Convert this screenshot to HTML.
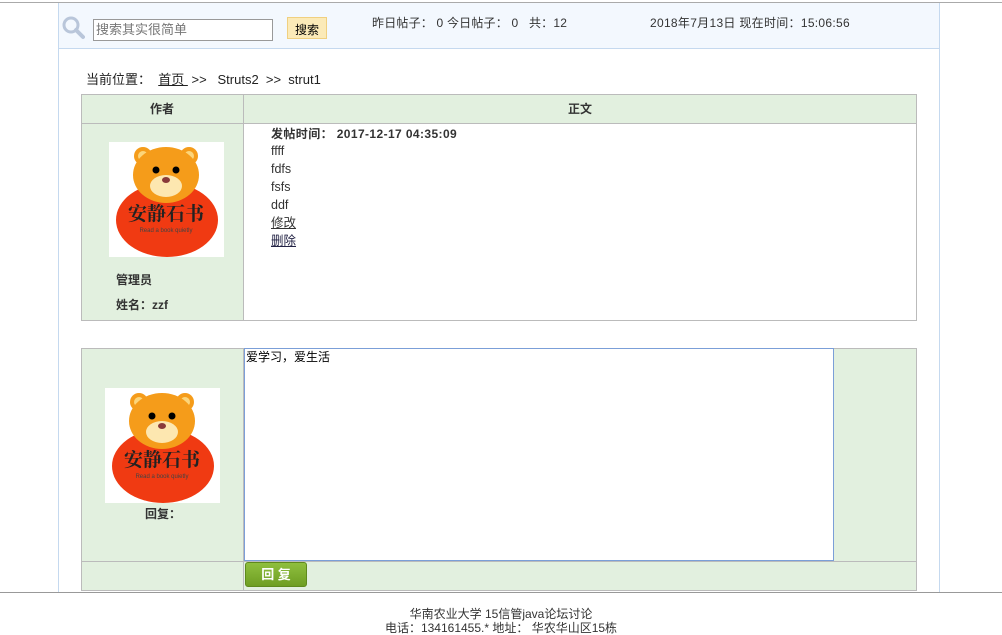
<!DOCTYPE html>
<html><head><meta charset="utf-8"><style>
*{margin:0;padding:0;box-sizing:border-box}
body{width:1002px;height:635px;position:relative;background:#fff;font-family:"Liberation Sans","Noto Sans CJK SC",sans-serif;font-size:12px;color:#333;overflow:hidden}
.a{position:absolute}
.g{background:#e2f0df}
.bd{border:1px solid #bbb}
</style></head><body>
<div class="a" style="left:0;top:2px;width:1002px;height:1px;background:#aaa"></div>
<div class="a" style="left:58px;top:3px;width:882px;height:590px;border-left:1px solid #c5d9ef;border-right:1px solid #c5d9ef"></div>
<div class="a" style="left:59px;top:3px;width:880px;height:46px;background:#f3f8fe;border-bottom:1px solid #c5d9ef"></div>
<svg class="a" style="left:61px;top:15px" width="24" height="26"><circle cx="10" cy="10" r="7" fill="none" stroke="#b9c6da" stroke-width="3"/><line x1="15" y1="15" x2="22" y2="22" stroke="#b9c6da" stroke-width="4" stroke-linecap="round"/></svg>
<div class="a" style="left:93px;top:19px;width:180px;height:22px;border:1px solid #999;background:#fff;color:#777;font-size:13px;padding:2px 2px;line-height:16px">搜索其实很简单</div>
<div class="a" style="left:287px;top:17px;width:40px;height:22px;background:#fbeab8;border:1px solid #f0d080;font-size:12px;text-align:center;line-height:24px;color:#000">搜索</div>
<div class="a" style="left:372px;top:14px;font-size:12px;color:#333;letter-spacing:0.2px">昨日帖子： 0 今日帖子： 0 &nbsp; 共：12</div>
<div class="a" style="left:650px;top:14px;font-size:12px;color:#333;letter-spacing:0.3px">2018年7月13日 现在时间：15:06:56</div>
<div class="a" style="left:86px;top:69px;font-size:13px;color:#222">当前位置： &nbsp;<u>首页 </u> &nbsp;&gt;&gt; &nbsp; Struts2 &nbsp;&gt;&gt; &nbsp;strut1</div>

<div class="a g bd" style="left:81px;top:94px;width:836px;height:227px"></div>
<div class="a" style="left:243px;top:94px;width:1px;height:227px;background:#bbb"></div>
<div class="a" style="left:81px;top:123px;width:836px;height:1px;background:#bbb"></div>
<div class="a" style="left:244px;top:124px;width:672px;height:196px;background:#fff"></div>
<div class="a" style="left:81px;top:100px;width:162px;text-align:center;font-weight:bold">作者</div>
<div class="a" style="left:244px;top:100px;width:672px;text-align:center;font-weight:bold">正文</div>
<div class="a" style="left:271px;top:125px;font-weight:bold;font-size:12px;letter-spacing:0.4px">发帖时间： 2017-12-17 04:35:09</div>
<div class="a" style="left:271px;top:142px;line-height:18px;font-size:12.5px">ffff<br>fdfs<br>fsfs<br>ddf<br><u>修改</u><br><u style="color:#224">删除</u></div>
<div class="a" style="left:116px;top:271px;font-weight:bold">管理员</div>
<div class="a" style="left:116px;top:296px;font-weight:bold">姓名：zzf</div>

<div class="a g bd" style="left:81px;top:348px;width:836px;height:243px"></div>
<div class="a" style="left:243px;top:348px;width:1px;height:243px;background:#bbb"></div>
<div class="a" style="left:81px;top:561px;width:836px;height:1px;background:#bbb"></div>
<div class="a" style="left:244px;top:348px;width:590px;height:213px;background:#fff;border:1px solid #7b9fd8;padding:0 1px;font-size:12px;color:#000;line-height:16px">爱学习，爱生活</div>
<div class="a" style="left:145px;top:505px;font-weight:bold">回复：</div>
<div class="a" style="left:245px;top:562px;width:62px;height:25px;background:linear-gradient(#8fbf3f,#6e9e22);border:1px solid #5e8a1c;border-radius:3px;color:#fff;font-weight:bold;text-align:center;line-height:23px;font-size:13px">回 复</div>

<div class="a" style="left:0;top:592px;width:1002px;height:1px;background:#999"></div>
<div class="a" style="left:0;top:607px;width:1002px;text-align:center;font-size:12px;color:#333;line-height:14px">华南农业大学 15信管java论坛讨论<br>电话：134161455.* 地址： 华农华山区15栋</div>

<svg class="a" style="left:109px;top:142px" width="115" height="115" viewBox="0 0 115 115"><rect width="115" height="115" fill="#fff"/><ellipse cx="58" cy="78" rx="51" ry="37" fill="#f03a12"/><circle cx="34" cy="14" r="9" fill="#f59c1a"/><circle cx="80" cy="14" r="9" fill="#f59c1a"/><circle cx="34" cy="14" r="5" fill="#fcd57a"/><circle cx="80" cy="14" r="5" fill="#fcd57a"/><ellipse cx="57" cy="33" rx="33" ry="28" fill="#f59c1a"/><ellipse cx="57" cy="44" rx="16" ry="11" fill="#fde7b0"/><circle cx="47" cy="28" r="3.5" fill="#000"/><circle cx="67" cy="28" r="3.5" fill="#000"/><ellipse cx="57" cy="38" rx="4" ry="3" fill="#8a3a3a"/><text x="57" y="78" text-anchor="middle" font-size="19" font-weight="bold" fill="#222" font-family="Noto Serif CJK SC,serif">安静石书</text><text x="57" y="90" text-anchor="middle" font-size="6" fill="#444">Read a book quietly</text></svg>
<svg class="a" style="left:105px;top:388px" width="115" height="115" viewBox="0 0 115 115"><rect width="115" height="115" fill="#fff"/><ellipse cx="58" cy="78" rx="51" ry="37" fill="#f03a12"/><circle cx="34" cy="14" r="9" fill="#f59c1a"/><circle cx="80" cy="14" r="9" fill="#f59c1a"/><circle cx="34" cy="14" r="5" fill="#fcd57a"/><circle cx="80" cy="14" r="5" fill="#fcd57a"/><ellipse cx="57" cy="33" rx="33" ry="28" fill="#f59c1a"/><ellipse cx="57" cy="44" rx="16" ry="11" fill="#fde7b0"/><circle cx="47" cy="28" r="3.5" fill="#000"/><circle cx="67" cy="28" r="3.5" fill="#000"/><ellipse cx="57" cy="38" rx="4" ry="3" fill="#8a3a3a"/><text x="57" y="78" text-anchor="middle" font-size="19" font-weight="bold" fill="#222" font-family="Noto Serif CJK SC,serif">安静石书</text><text x="57" y="90" text-anchor="middle" font-size="6" fill="#444">Read a book quietly</text></svg>
</body></html>
